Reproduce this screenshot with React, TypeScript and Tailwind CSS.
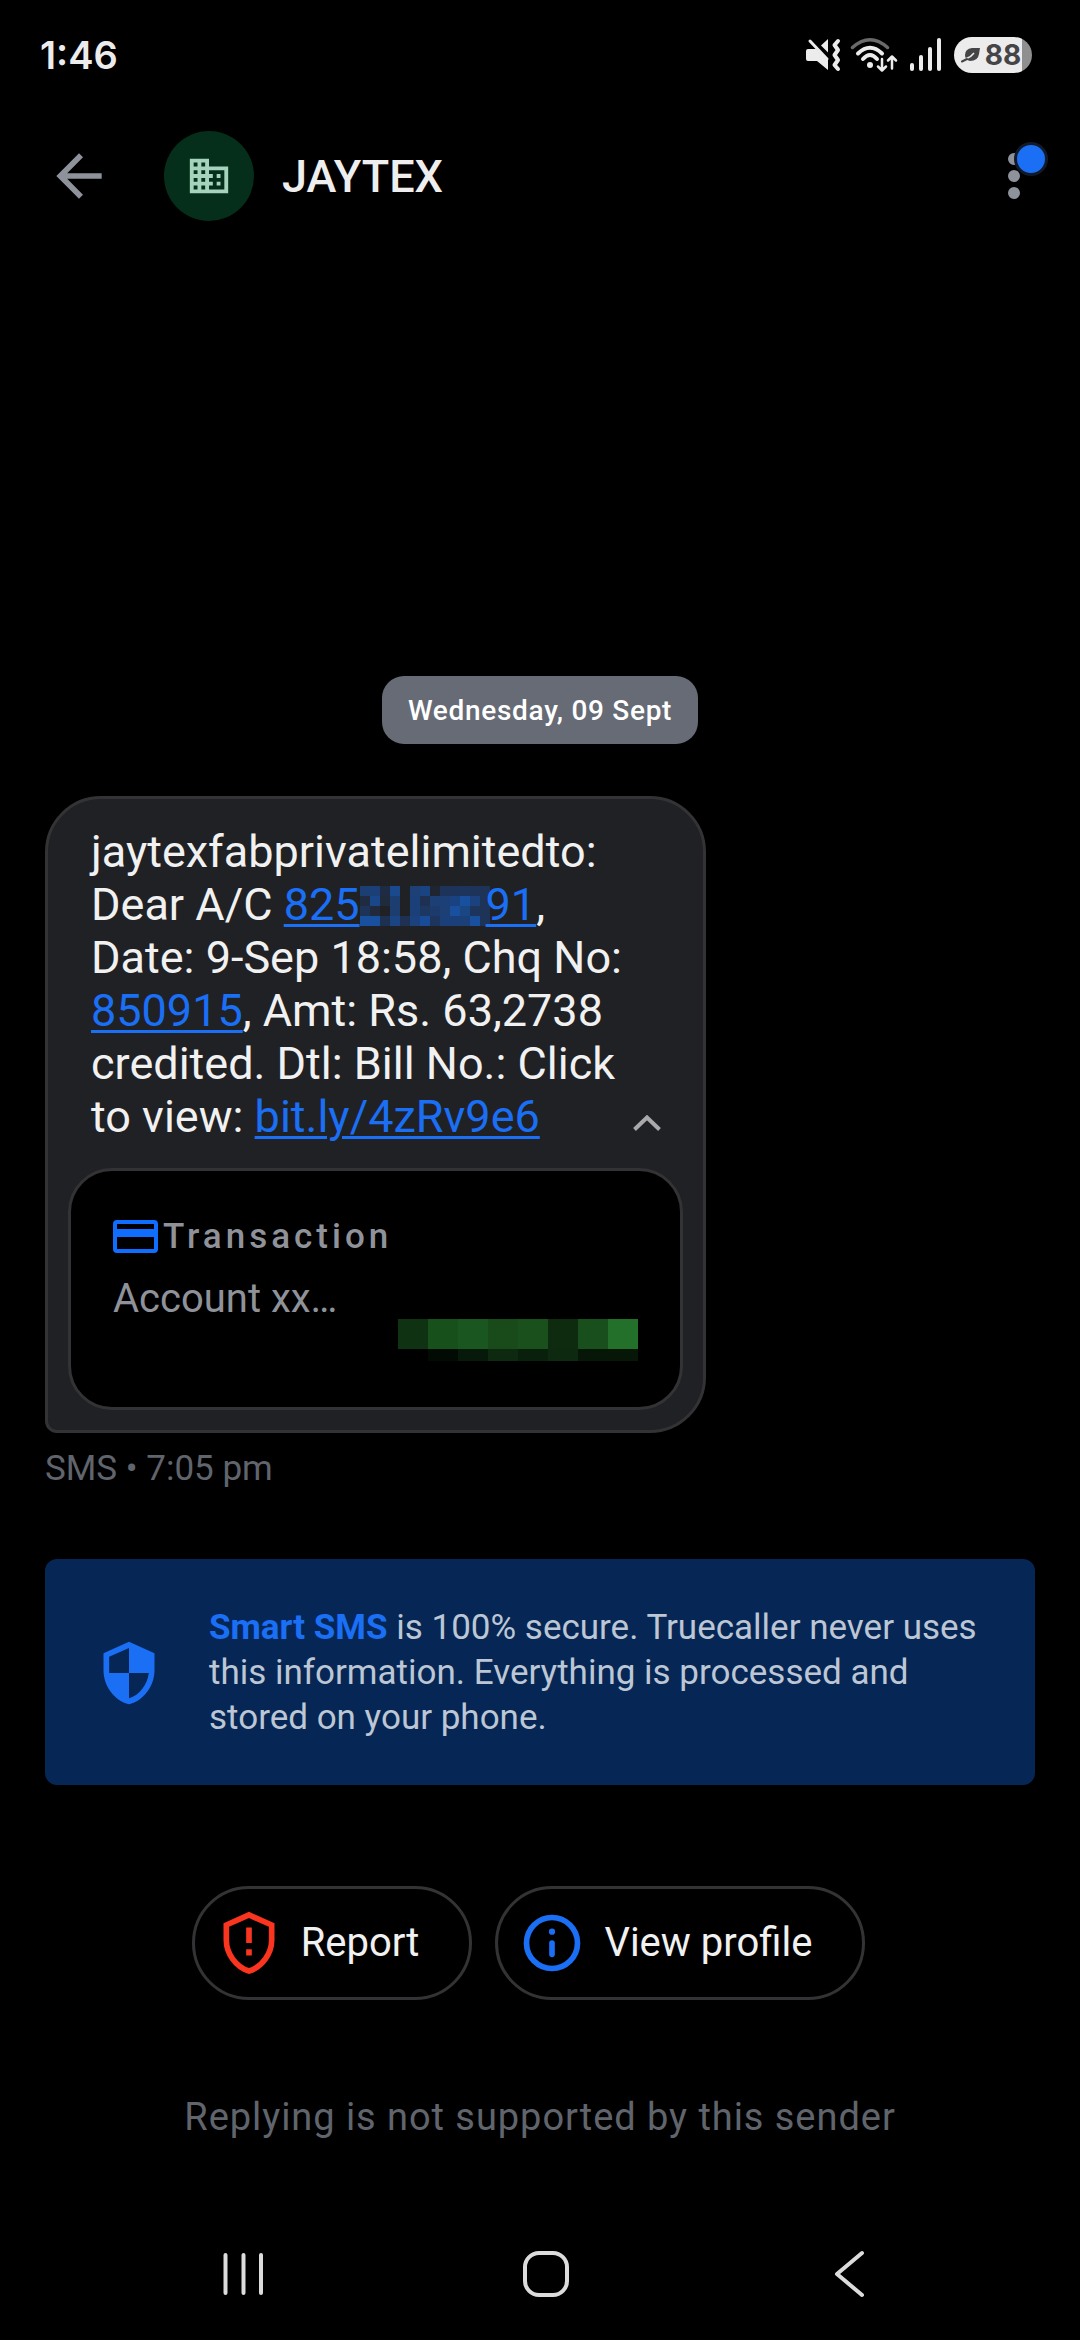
import React from 'react';
import { MdArrowBack, MdBusiness, MdSecurity } from 'react-icons/md';

// ============================================
// DATA
// ============================================

const ACCOUNT_MASK = [
  ['#1b3e73', '#1c3f78', '#1e2b42', '#1a4a8e', '#202124', '#1d4076', '#1a4481', '#202631', '#1d335a', '#1d335a', '#1d345c', '#1d335a', '#1d3358'],
  ['#1f2b40', '#1a478a', '#1f2a3c', '#1c3d70', '#202124', '#1b3f78', '#1e3152', '#1c3f75', '#1c3f78', '#1b4280', '#18509f', '#1b427e', '#1d3358'],
  ['#1d3358', '#202a3c', '#202124', '#1c3d70', '#202124', '#1b3f78', '#1d3860', '#1c3b6c', '#1c3f75', '#18509f', '#1a4684', '#1d345c', '#1d3358'],
  ['#18509f', '#18509f', '#1e3050', '#1a4582', '#1e3152', '#1b427e', '#184c98', '#1d345c', '#1b3f78', '#1b3f78', '#1b3f78', '#18509f', '#1d3358'],
];

const AMOUNT_MASK = [
  { top: '#0f3212', bottom: '#000000' },
  { top: '#18501c', bottom: '#020b03' },
  { top: '#1a561f', bottom: '#07190a' },
  { top: '#184a1a', bottom: '#0d2a10' },
  { top: '#19501c', bottom: '#08200c' },
  { top: '#0e2b10', bottom: '#0d2a11' },
  { top: '#194f1c', bottom: '#061607' },
  { top: '#22702a', bottom: '#061607' },
];

// ============================================
// ICONS
// ============================================

function MutedIcon() {
  return (
    <svg className="h-9 w-9" viewBox="0 0 36 36" fill="none" aria-hidden="true">
      <path d="M0 14Q0 12 2 12H10L22 23V33L11 24H2Q0 24 0 22Z" fill="#ececec" />
      <path d="M15 8.500L22 2V15.500Z" fill="#ececec" />
      <path d="M4 4L21 22" stroke="#ececec" strokeWidth="3" strokeLinecap="round" />
      <path d="M32 4L28.500 8L32 13L28.500 18L32 23L28.500 28L32 32" stroke="#ececec" strokeWidth="4" strokeLinecap="round" strokeLinejoin="round" />
    </svg>
  );
}

function WifiIcon() {
  return (
    <svg className="h-9 w-12" viewBox="0 0 48 36" fill="none" strokeLinecap="round" aria-hidden="true">
      <path d="M2.500 10.500Q20 -5 37.500 10.500" stroke="#6a6a6a" strokeWidth="3.500" />
      <path d="M8 16.500Q20 5 32 16.500" stroke="#ececec" strokeWidth="4" />
      <path d="M13 22Q20 14 27 22" stroke="#ececec" strokeWidth="4" />
      <circle cx="20" cy="28" r="3" fill="#ececec" />
      <path d="M32 22V33M28 29.500L32 33.500L36 29.500M42 31.500V20M38 23.500L42 19.500L46 23.500" stroke="#ececec" strokeWidth="2.500" strokeLinejoin="round" />
    </svg>
  );
}

function SignalIcon() {
  return (
    <svg className="h-9 w-8" viewBox="0 0 32 36" fill="#ececec" aria-hidden="true">
      <rect x="0" y="26" width="4" height="8" rx="2" />
      <rect x="9" y="18" width="4" height="16" rx="2" />
      <rect x="18" y="10" width="4" height="24" rx="2" />
      <rect x="27" y="1" width="4" height="33" rx="2" />
    </svg>
  );
}

function LeafIcon() {
  return (
    <svg className="h-4 w-5" viewBox="0 0 20 16" fill="none" aria-hidden="true">
      <path d="M19 1H11Q4 2 4 8Q4 13 9 14Q17 14 18 7Z" fill="#454548" />
      <path d="M1 14L5.500 11.500Q10 10 13 6" stroke="#ececec" strokeWidth="1.500" />
      <path d="M1 14.500L6 12" stroke="#454548" strokeWidth="2" strokeLinecap="round" />
    </svg>
  );
}

function CardIcon() {
  return (
    <svg className="h-[34px] w-[46px]" viewBox="0 0 46 34" fill="none" aria-hidden="true">
      <rect x="2" y="2" width="41" height="29" rx="2" stroke="#0f6dff" strokeWidth="4" />
      <path d="M2 13H43" stroke="#0f6dff" strokeWidth="8" />
    </svg>
  );
}

function ReportIcon() {
  return (
    <svg className="size-[68px]" viewBox="0 0 24 24" fill="none" aria-hidden="true">
      <path d="M12 2.100L4 5.650V11C4 15.500 7.200 20.400 12 21.900C16.800 20.400 20 15.500 20 11V5.650Z" stroke="#f9341f" strokeWidth="2" />
      <path d="M12 6.500V12M12 14.200V16.400" stroke="#f9341f" strokeWidth="2" />
    </svg>
  );
}

function InfoIcon() {
  return (
    <svg className="size-[68px]" viewBox="0 0 24 24" fill="none" aria-hidden="true">
      <circle cx="12" cy="12" r="9" stroke="#1a6ff5" strokeWidth="2" />
      <circle cx="12" cy="8" r="1.100" fill="#1a6ff5" />
      <path d="M12 12V16" stroke="#1a6ff5" strokeWidth="2" strokeLinecap="round" />
    </svg>
  );
}

// Pixelated block that hides the middle digits of the account number
function AccountMask() {
  return (
    <svg className="-mr-1 inline-block h-10 w-[130px] align-[-6px]" viewBox="0 0 130 40" shapeRendering="crispEdges" aria-hidden="true">
      {ACCOUNT_MASK.map((row, y) =>
        row.map((fill, x) => <rect key={`${x}-${y}`} x={x * 10} y={y * 10} width="10" height="10" fill={fill} />)
      )}
    </svg>
  );
}

function AmountMask() {
  return (
    <svg className="h-[42px] w-60" viewBox="0 0 240 42" shapeRendering="crispEdges" aria-hidden="true">
      {AMOUNT_MASK.map((cell, i) => (
        <g key={i}>
          <rect x={i * 30} y="0" width="30" height="30" fill={cell.top} />
          <rect x={i * 30} y="30" width="30" height="12" fill={cell.bottom} />
        </g>
      ))}
    </svg>
  );
}

// ============================================
// SECTIONS
// ============================================

function StatusBar() {
  return (
    <div className="flex h-[110px] items-center justify-between pr-12 pl-10 text-[#ececec]">
      <span className="font-[Inter] text-[38px] font-semibold">1:46</span>
      <div className="flex items-center gap-2">
        <MutedIcon />
        <WifiIcon />
        <div className="px-1">
          <SignalIcon />
        </div>
        <div className="flex h-9 w-[78px] items-center justify-center gap-1 rounded-full bg-linear-to-r from-[#ececec] from-87% to-[#8f8f8f] to-87% pr-1">
          <LeafIcon />
          <span className="font-[Inter] text-[28px] leading-9 font-bold text-[#454548]">88</span>
        </div>
      </div>
    </div>
  );
}

function Header() {
  return (
    <header className="flex h-[132px] items-center pr-12 pl-[45px]">
      <button type="button" aria-label="Back">
        <MdArrowBack className="size-[68px] text-[#8e929b]" />
      </button>
      <div className="ml-[51px] flex size-[90px] items-center justify-center rounded-full bg-[#052f1a]">
        <MdBusiness className="size-[46px] text-[#a5d3bc]" />
      </div>
      <h1 className="ml-7 flex-1 pt-0.5 text-[45px] font-medium text-[#eeeeee]">JAYTEX</h1>
      <button type="button" aria-label="More options" className="relative flex w-9 flex-col items-center gap-[5px]">
        <span className="size-3 rounded-full bg-[#8e929b]" />
        <span className="size-3 rounded-full bg-[#8e929b]" />
        <span className="size-3 rounded-full bg-[#8e929b]" />
        <span className="absolute -top-[11px] left-[18px] size-[34px] rounded-full border-3 border-[#121a29] bg-[#1a6ff5]" />
      </button>
    </header>
  );
}

function MessageBubble() {
  return (
    <article className="w-[661px] max-w-full rounded-[56px] rounded-bl-[12px] border-3 border-[#333335] bg-[#202124] px-5 pt-[26px] pb-5">
      <div className="flex items-end justify-between pr-[22px] pl-[23px]">
        <p className="w-[540px] text-[45px] leading-[53px] text-[#f1f1f1]">
          jaytexfabprivatelimitedto: Dear A/C{' '}
          <a href="#account" className="whitespace-nowrap text-[#1a6ff5] underline decoration-3 underline-offset-4">
            825
            <AccountMask />
            91
          </a>
          , Date: 9-Sep 18:58, Chq No:{' '}
          <a href="#cheque" className="text-[#1a6ff5] underline decoration-3 underline-offset-4">850915</a>, Amt: Rs.
          63,2738 credited. Dtl: Bill No.: Click to view:{' '}
          <a href="#link" className="text-[#1a6ff5] underline decoration-3 underline-offset-4">bit.ly/4zRv9e6</a>
        </p>
        <button type="button" aria-label="Collapse" className="mb-3">
          <svg className="h-4 w-7" viewBox="0 0 28 16" fill="none" aria-hidden="true">
            <path d="M1.500 14.500L14 2.500L26.500 14.500" stroke="#a9a9ab" strokeWidth="4" />
          </svg>
        </button>
      </div>

      <section className="mt-[25px] flex h-[242px] flex-col rounded-[44px] border-3 border-[#333335] bg-black px-[42px] pt-[46px]">
        <div className="flex items-center gap-1">
          <CardIcon />
          <h2 className="text-[35px] leading-10 font-medium tracking-[4px] text-[#8f9399]">Transaction</h2>
        </div>
        <p className="mt-[22px] text-[40px] leading-10 text-[#8f9399]">Account xx…</p>
        <div className="flex justify-end">
          <AmountMask />
        </div>
      </section>
    </article>
  );
}

function SecurityNotice() {
  return (
    <div className="mt-[70px] flex items-center gap-[46px] rounded-[12px] bg-[#062755] pt-[46px] pr-10 pb-[45px] pl-[50px]">
      <MdSecurity className="size-[68px] shrink-0 text-[#1a6ff5]" />
      <p className="text-[35px] leading-[45px] text-[#bcc6d4]">
        <strong className="font-bold text-[#1a6ff5]">Smart SMS</strong> is 100% secure. Truecaller never uses this
        information. Everything is processed and stored on your phone.
      </p>
    </div>
  );
}

function NavigationBar() {
  return (
    <nav className="grid h-[132px] grid-cols-3 items-center justify-items-center pr-20 pl-[92px]">
      <button type="button" aria-label="Recent apps">
        <svg className="h-12 w-12" viewBox="0 0 48 48" fill="none" aria-hidden="true">
          <path d="M6.500 5V43M24.500 5V43M42 5V43" stroke="#dcdcdc" strokeWidth="4" strokeLinecap="round" />
        </svg>
      </button>
      <button type="button" aria-label="Home">
        <svg className="h-12 w-12" viewBox="0 0 48 48" fill="none" aria-hidden="true">
          <rect x="3" y="3" width="42" height="42" rx="14" stroke="#dcdcdc" strokeWidth="4" />
        </svg>
      </button>
      <button type="button" aria-label="Back">
        <svg className="h-12 w-12" viewBox="0 0 48 48" fill="none" aria-hidden="true">
          <path d="M37 3L12 24L37 45" stroke="#dcdcdc" strokeWidth="4" strokeLinecap="round" strokeLinejoin="round" />
        </svg>
      </button>
    </nav>
  );
}

export default function App() {
  return (
    <div className="flex min-h-screen flex-col bg-black font-[Roboto,sans-serif]">
      <StatusBar />
      <Header />

      <main className="flex flex-1 flex-col justify-end px-[45px]">
        <time className="mb-[52px] self-center rounded-[22px] bg-[#666b75] px-[26px] pt-[15px] pb-[13px] text-[28px] leading-10 font-medium tracking-wide text-white">
          Wednesday, 09 Sept
        </time>
        <MessageBubble />
        <p className="mt-4 text-[35px] leading-10 text-[#60656d]">SMS • 7:05 pm</p>
        <SecurityNotice />

        {/* Actions */}
        <div className="mt-[101px] flex justify-center text-[40px] text-[#f1f1f1]">
          <button type="button" className="mr-[23px] flex h-[114px] items-center gap-[18px] rounded-full border-3 border-[#333335] pr-[50px] pl-5">
            <ReportIcon />
            Report
          </button>
          <button type="button" className="mr-[23px] flex h-[114px] items-center gap-[18px] rounded-full border-3 border-[#333335] pr-[50px] pl-5">
            <InfoIcon />
            View profile
          </button>
        </div>

        <p className="mt-[93px] mb-[67px] text-center text-[38px] leading-12 tracking-wide text-[#60656d]">
          Replying is not supported by this sender
        </p>
      </main>

      <NavigationBar />
    </div>
  );
}
